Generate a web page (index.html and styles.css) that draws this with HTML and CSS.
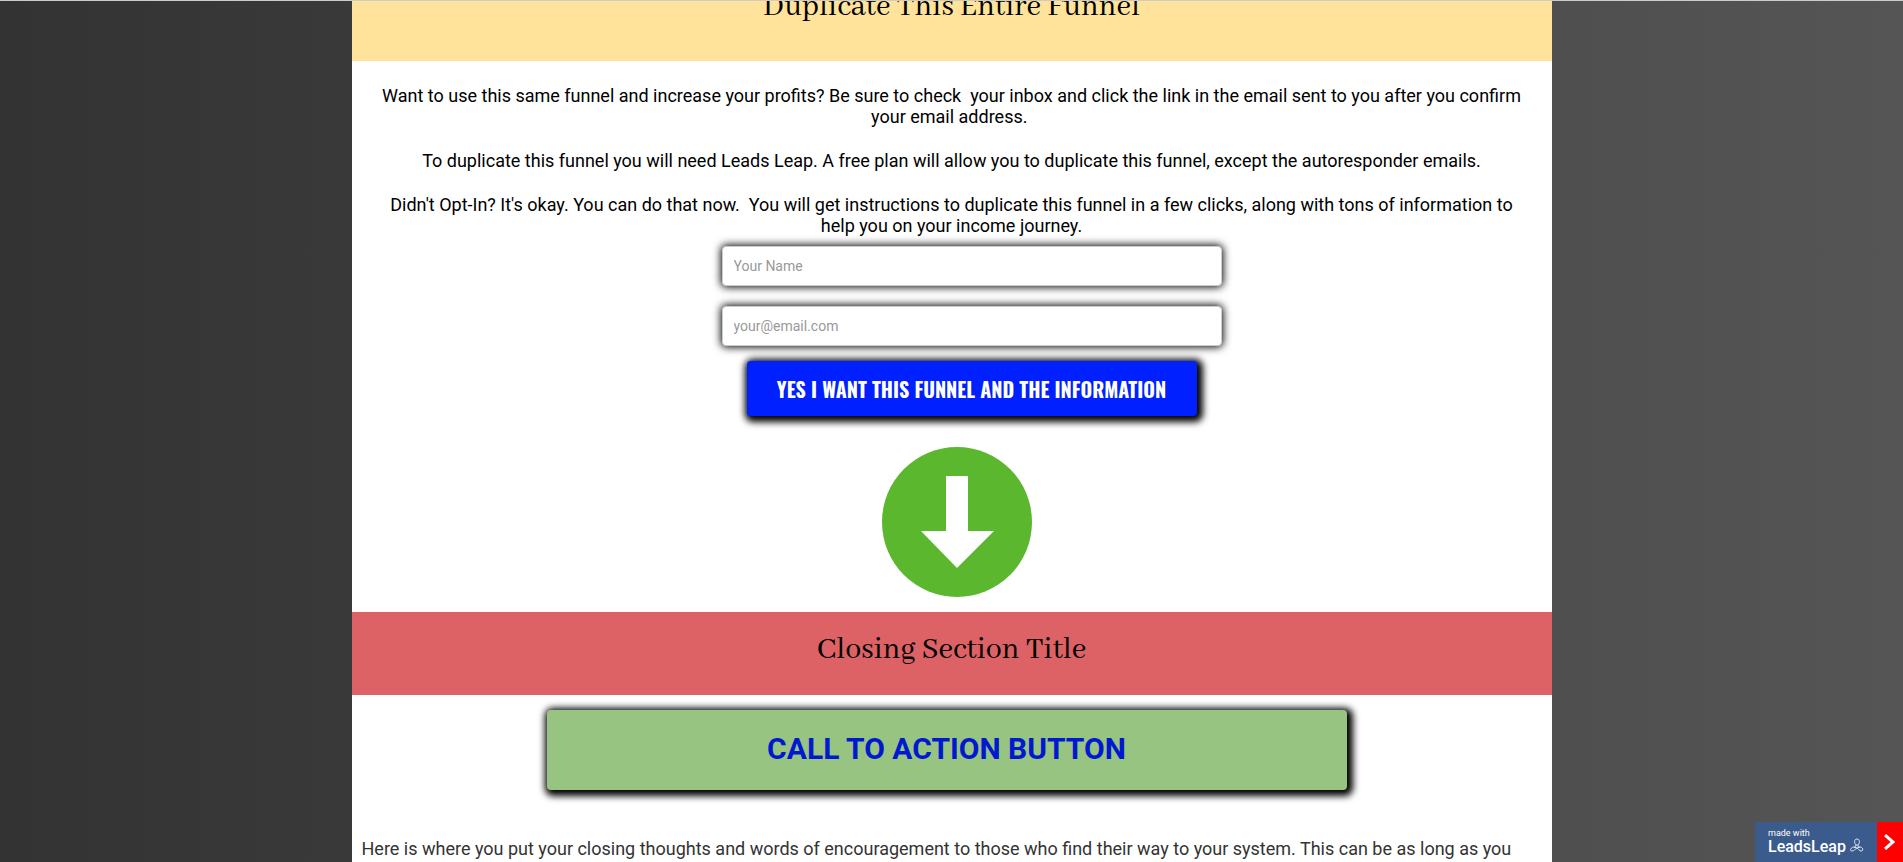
FILE: index.html
```html
<!DOCTYPE html>
<html lang="en">
<head>
    <meta charset="UTF-8">
    <meta name="viewport" content="width=device-width, initial-scale=1.0">
    <title>Duplicate This Entire Funnel</title>
    <link rel="stylesheet" href="styles.css">
</head>
<body>
    <div class="container">
        <div class="title-section yellow">
            <h2>Duplicate This Entire Funnel</h2>
        </div>
        <div class="intro">
            <p>Want to use this same funnel and increase your profits? Be sure to check &nbsp;your inbox and click the link in the email sent to you after you confirm your email address.&nbsp;</p>
            <p>To duplicate this funnel you will need Leads Leap. A free plan will allow you to duplicate this funnel, except the autoresponder emails.</p>
            <p>Didn't Opt-In? It's okay. You can do that now. &nbsp;You will get instructions to duplicate this funnel in a few clicks, along with tons of information to help you on your income journey.</p>
        </div>
        <form class="optin-form">
            <input type="text" name="name" placeholder="Your Name" aria-label="Your Name">
            <input type="email" name="email" placeholder="your@email.com" aria-label="Your email">
            <button type="button" class="optin-button">YES I WANT THIS FUNNEL AND THE INFORMATION</button>
        </form>
        <div class="arrow">
            <svg width="150" height="150" viewBox="0 0 150 150">
                <circle cx="75" cy="75" r="75" fill="#5ab72e"/>
                <path d="M64 29h22v55h26L75 121 39 84h25z" fill="#fff"/>
            </svg>
        </div>
        <div class="title-section red">
            <h2>Closing Section Title</h2>
        </div>
        <div class="cta">
            <button type="button" class="cta-button">CALL TO ACTION BUTTON</button>
        </div>
        <p class="closing">Here is where you put your closing thoughts and words of encouragement to those who find their way to your system. This can be as long as you</p>
    </div>

    <div class="badge">
        <a href="#" class="badge-link">
            <span class="badge-small">made with</span>
            <span class="badge-name">LeadsLeap
                <svg width="14" height="18" viewBox="0 0 14 18" fill="none" stroke="#dbe4f2" stroke-width="1">
                    <path d="M6 7C4 5 4 1 7 1s3 4 1 6c0 2 1 2 2 2 3 0 4 4 1 4-2 0-2-2-4-3-2 1-3 3-5 3-3 0-1-4 2-4 1 0 2 0 2-2z"/>
                    <path d="M6 7h2M4 9l3 1 3-1"/>
                </svg>
            </span>
        </a>
        <button type="button" class="badge-toggle" aria-label="Hide">
            <svg width="12" height="16" viewBox="0 0 12 16" fill="none" stroke="#fff" stroke-width="3">
                <path d="M1 1l8 7-8 7"/>
            </svg>
        </button>
    </div>
</body>
</html>
```
FILE: styles.css
```css
* {
    box-sizing: border-box;
}
body {
    margin: 0;
    border-top: 1px solid #ccc;
    font-family: Roboto, Arial, sans-serif;
    font-size: 18px;
    line-height: 21px;
    color: #333;
    background: linear-gradient(to right, #333, #555);
}
.container {
    max-width: 1200px;
    min-height: calc(100vh - 1px);
    margin: 0 auto;
    background-color: #fff;
    overflow: hidden;
}
.title-section {
    padding: 20px 10px 27px;
}
.title-section h2 {
    margin: 0;
    font-family: "Abhaya Libre", "Liberation Serif", serif;
    font-size: 32px;
    font-weight: normal;
    line-height: 36px;
    text-align: center;
    color: #000;
}
.yellow {
    background-color: #ffe39b;
    /* pulled up under the top edge */
    margin-top: -32px;
    padding-bottom: 36px;
}
.red {
    background-color: #dc6265;
}
.intro {
    padding: 24px 30px 0;
    text-align: center;
    color: #000;
}
.intro p {
    margin: 0 0 23px;
}
.intro p:last-child {
    margin-bottom: 0;
}
.optin-form {
    display: flex;
    flex-direction: column;
    align-items: center;
    padding: 10px 0 0 40px;
}
.optin-form input {
    width: 500px;
    max-width: 100%;
    height: 40px;
    margin-bottom: 20px;
    padding: 0 11px 1px;
    border: 1px solid #ccc;
    border-radius: 4px;
    font-family: inherit;
    font-size: 14px;
    box-shadow: 0 0 8px 1px #000;
}
.optin-form input::placeholder {
    color: #999;
}
.optin-button {
    width: 450px;
    max-width: 100%;
    height: 55px;
    margin-top: -5px;
    border: none;
    border-radius: 4px;
    background-color: #0020ff;
    color: #fff;
    font-family: Oswald, "Liberation Sans Narrow", Roboto, sans-serif;
    font-size: 20px;
    font-weight: bold;
    white-space: nowrap;
    cursor: pointer;
    box-shadow: 2px 2px 7px 4px #000;
}
.arrow {
    padding: 31px 0 15px 10px;
    text-align: center;
}
.arrow svg {
    display: block;
    margin: 0 auto;
}
.cta {
    padding: 15px 10px 0 0;
    text-align: center;
}
.cta-button {
    display: block;
    width: 800px;
    max-width: 100%;
    height: 80px;
    margin: 0 auto;
    padding: 0 0 3px;
    border: none;
    border-radius: 4px;
    background-color: #98c482;
    color: #0018d0;
    font-family: inherit;
    font-size: 30px;
    font-weight: bold;
    cursor: pointer;
    box-shadow: 2px 2px 7px 4px #000;
}
.closing {
    margin: 48px 10px 0;
}
.badge {
    position: fixed;
    right: 0;
    bottom: 0;
    display: flex;
    height: 40px;
}
.badge-link {
    display: flex;
    flex-direction: column;
    justify-content: center;
    width: 122px;
    padding-left: 13px;
    background-color: #3b5b8c;
    color: #fff;
    text-decoration: none;
}
.badge-small {
    font-size: 9px;
    line-height: 10px;
}
.badge-name {
    display: flex;
    align-items: center;
    gap: 4px;
    font-size: 16px;
    font-weight: 500;
    line-height: 16px;
}
.badge-toggle {
    width: 26px;
    padding: 0;
    border: none;
    background-color: #f00;
    cursor: pointer;
}
.badge-toggle svg {
    display: block;
    margin: 0 auto;
}
```
